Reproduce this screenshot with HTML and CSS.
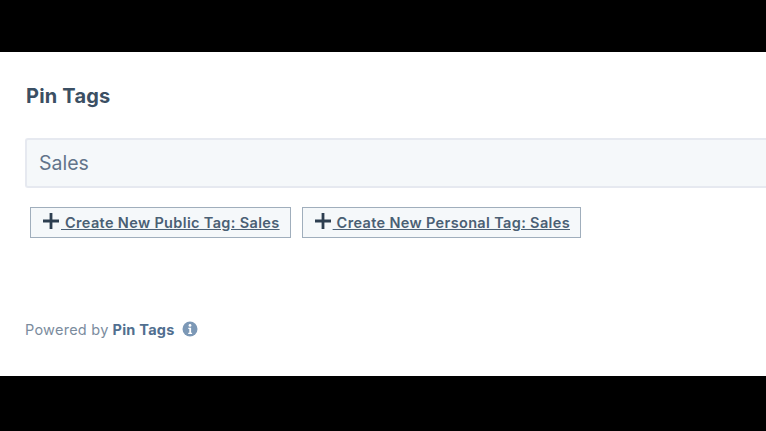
FILE: index.html
```html
<!DOCTYPE html>
<html lang="en">
<head>
  <meta charset="UTF-8">
  <title>Pin Tags</title>
  <link rel="stylesheet" href="styles.css">
</head>
<body>

<div class="bar bar-top"></div>

<div class="panel">
  <h1 class="panel-title">Pin Tags</h1>

  <div class="tag-input">Sales</div>

  <div class="tag-actions">
    <a class="tag-btn" href="#">
      <svg class="plus" viewBox="0 0 16 16" width="16" height="16"><path d="M8 0v16M0 8h16"/></svg>
      <span class="tag-label">&nbsp;Create New Public Tag: Sales</span>
    </a>
    <a class="tag-btn" href="#">
      <svg class="plus" viewBox="0 0 16 16" width="16" height="16"><path d="M8 0v16M0 8h16"/></svg>
      <span class="tag-label">&nbsp;Create New Personal Tag: Sales</span>
    </a>
  </div>

  <div class="powered">
    Powered by <strong>Pin Tags</strong>
    <svg class="info" viewBox="0 0 16 16" width="16" height="16">
      <circle cx="8" cy="8" r="7.5" fill="#7c98b6"/>
      <circle cx="8" cy="4.4" r="1.4" fill="#fff"/>
      <path d="M6.3 6.8h2.8v5h1v1.2H6.2v-1.2h1.1V8H6.3z" fill="#fff"/>
    </svg>
  </div>
</div>

<div class="bar bar-bottom"></div>

</body>
</html>
```

FILE: styles.css
```css
html, body {
  margin: 0;
  height: 431px;
  overflow: hidden;
  background: #000;
  font-family: "Inter", "Liberation Sans", sans-serif;
}

/* top and bottom black bands */
.bar {
  background: #000;
}
.bar-top {
  height: 52px;
}
.bar-bottom {
  height: 55px;
}

.panel {
  height: 324px;
  box-sizing: border-box;
  background: #fff;
  padding: 32px 0 0 25px;
}

.panel-title {
  margin: 0 0 30px 1px;
  font-size: 20px;
  line-height: 24px;
  font-weight: 700;
  letter-spacing: 0.2px;
  color: #3b4f63;
}

.tag-input {
  height: 50px;
  box-sizing: border-box;
  padding-left: 12px;
  background: #f5f8fa;
  border: 2px solid #e6e9f0;
  border-right: none;
  border-radius: 3px 0 0 3px;
  font-size: 19.5px;
  line-height: 47px;
  color: #62748a;
}

/* buttons under the input */
.tag-actions {
  display: flex;
  gap: 11px;
  margin: 19px 0 0 5px;
}

.tag-btn {
  display: flex;
  align-items: center;
  height: 31px;
  box-sizing: border-box;
  padding: 0 10px 0 12px;
  background: #f5f8fa;
  border: 1.5px solid #a0aebc;
  color: #4a5f74;
  font-size: 14.5px;
  font-weight: 600;
  letter-spacing: 0.35px;
  text-decoration: none;
}

.plus {
  flex: none;
  margin: -3px 2px 0 0;
  stroke: #2d3e50;
  stroke-width: 2.8;
  fill: none;
}

.tag-label {
  text-decoration: underline;
  white-space: nowrap;
}

.powered {
  display: flex;
  align-items: center;
  gap: 4px;
  margin: 82px 0 0 0;
  font-size: 14.5px;
  line-height: 20px;
  letter-spacing: 0.25px;
  color: #7b8c9e;
}
.powered strong {
  color: #516f90;
}
.info {
  margin-left: 3px;
  margin-top: -3px;
}
```
